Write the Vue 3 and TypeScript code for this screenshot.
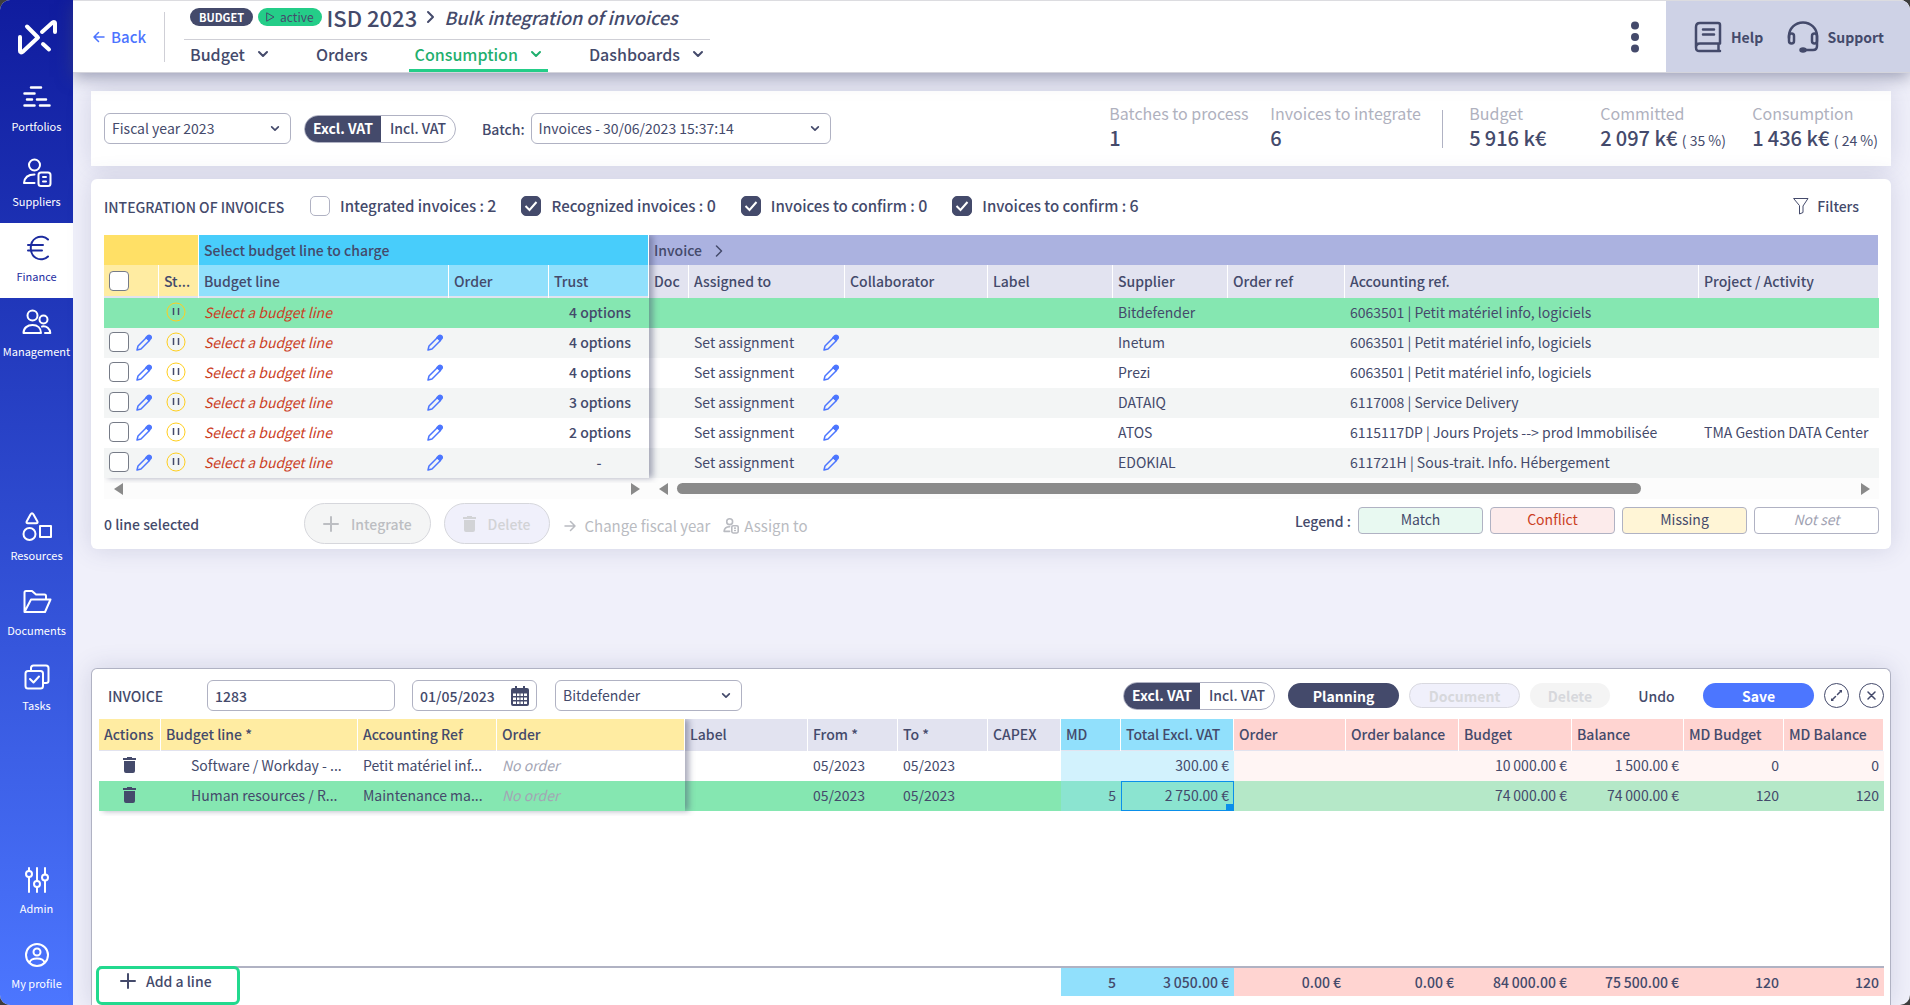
<script setup lang="ts">
import { ref } from 'vue'

interface NavItem {
  label: string
  icon: string
  active?: boolean
}

const navGroups: NavItem[][] = [
  [
    {
      label: 'Portfolios',
      icon: '<path d="M9 4.500h10M2.500 10.500h10M5 16.500h5M15 16.500h9M2.500 22.500h10M18 22.500h9.500" stroke-width="2.500"/>',
    },
    {
      label: 'Suppliers',
      icon: '<circle cx="12.500" cy="7" r="5.500"/><path d="M12.500 16.500c-6 0-10 3-10.500 8.500h10.500"/><rect x="16.500" y="14.500" width="12" height="13.500" rx="2.500"/><path d="M21 19h3M21 23.500h3"/>',
    },
    {
      label: 'Finance',
      active: true,
      icon: '<path d="M26 6.500c-3-3-8-3.800-12-1.500-7 4-7 16 0 20 4 2.300 9 1.500 12-1.500M6 12h15M6 17.500h14"/>',
    },
    {
      label: 'Management',
      icon: '<circle cx="10.500" cy="7.500" r="5"/><circle cx="21.500" cy="11.500" r="4"/><path d="M1.500 25c0-5 4-8 9-8s8.500 3 8.500 8zM20 18.500c4.500-.8 8 2 8.300 6.500H23"/>',
    },
  ],
  [
    {
      label: 'Resources',
      icon: '<path d="M8.500 2.500q1.500-2.300 3 0l3.800 6.800q1 2-1.200 2H6q-2.200 0-1.200-2z"/><circle cx="7.500" cy="22" r="6"/><path d="M18 14h11v11H18z"/>',
    },
    {
      label: 'Documents',
      icon: '<path d="M2.500 25V5.500q0-1.500 1.500-1.500h6l4 3.500h8.500q1.500 0 1.500 1.500v3M2.500 25h20.500l5.500-12.500H9z"/>',
    },
    {
      label: 'Tasks',
      icon: '<rect x="3.500" y="9" width="17.500" height="17.500" rx="2.500"/><path d="M9 8.500V6q0-2.500 2.500-2.500H24q2.500 0 2.500 2.500v13q0 2-2.500 2h-2M8 17l3.500 3.500 5.500-6"/>',
    },
  ],
  [
    {
      label: 'Admin',
      icon: '<path d="M7 3v2.500M7 12v15M15 3v12.500M15 22.500V27M23 3v6.500M23 16v11"/><circle cx="7" cy="9" r="3"/><circle cx="15" cy="19" r="3"/><circle cx="23" cy="12.500" r="3"/>',
    },
    {
      label: 'My profile',
      icon: '<circle cx="15" cy="15" r="11"/><circle cx="15" cy="12" r="3.500"/><path d="M7.500 22.500c1-3.500 4-4 7.500-4s6.500.5 7.500 4"/>',
    },
  ],
]

const tabs = [
  { label: 'Budget', menu: true, active: false },
  { label: 'Orders', menu: false, active: false },
  { label: 'Consumption', menu: true, active: true },
  { label: 'Dashboards', menu: true, active: false },
]

const filters = ref([
  { id: 'f-integrated', label: 'Integrated invoices :', count: 2, on: false },
  { id: 'f-recognized', label: 'Recognized invoices :', count: 0, on: true },
  { id: 'f-confirm', label: 'Invoices to confirm :', count: 0, on: true },
  { id: 'f-pending', label: 'Invoices to confirm :', count: 6, on: true },
])

const invoices = [
  { trust: '4 options', supplier: 'Bitdefender', ref: '6063501 | Petit matériel info, logiciels', project: '', selected: true },
  { trust: '4 options', supplier: 'Inetum', ref: '6063501 | Petit matériel info, logiciels', project: '', selected: false },
  { trust: '4 options', supplier: 'Prezi', ref: '6063501 | Petit matériel info, logiciels', project: '', selected: false },
  { trust: '3 options', supplier: 'DATAIQ', ref: '6117008 | Service Delivery', project: '', selected: false },
  { trust: '2 options', supplier: 'ATOS', ref: '6115117DP | Jours Projets --> prod Immobilisée', project: 'TMA Gestion DATA Center', selected: false },
  { trust: '-', supplier: 'EDOKIAL', ref: '611721H | Sous-trait. Info. Hébergement', project: '', selected: false },
]

const legend = [
  { label: 'Match', kind: 'match' },
  { label: 'Conflict', kind: 'conflict' },
  { label: 'Missing', kind: 'missing' },
  { label: 'Not set', kind: 'unset' },
]

const lineHeads = [
  { label: 'Label', kind: 'plain' },
  { label: 'From *', kind: 'plain' },
  { label: 'To *', kind: 'plain' },
  { label: 'CAPEX', kind: 'plain' },
  { label: 'MD', kind: 'blue' },
  { label: 'Total Excl. VAT', kind: 'blue' },
  { label: 'Order', kind: 'red' },
  { label: 'Order balance', kind: 'red' },
  { label: 'Budget', kind: 'red' },
  { label: 'Balance', kind: 'red' },
  { label: 'MD Budget', kind: 'red' },
  { label: 'MD Balance', kind: 'red' },
]

const lines = [
  {
    budget: 'Software / Workday - ...',
    account: 'Petit matériel inf...',
    selected: false,
    cells: ['', '05/2023', '05/2023', '', '', '300.00 €', '', '', '10\u2009000.00 €', '1\u2009500.00 €', '0', '0'],
  },
  {
    budget: 'Human resources / R...',
    account: 'Maintenance ma...',
    selected: true,
    cells: ['', '05/2023', '05/2023', '', '5', '2\u2009750.00 €', '', '', '74\u2009000.00 €', '74\u2009000.00 €', '120', '120'],
  },
]

const totals = ['', '', '', '', '5', '3\u2009050.00 €', '0.00 €', '0.00 €', '84\u2009000.00 €', '75\u2009500.00 €', '120', '120']

const invoiceNumber = ref('1283')
const invoiceDate = ref('01/05/2023')
</script>

<template>
  <div class="app">
    <nav class="sidebar" aria-label="Main">
      <ul class="nav-group">
        <li class="logo">
          <svg width="42" height="36" viewBox="0 0 42 36" fill="none" stroke="#fff" stroke-width="4" stroke-linecap="round" stroke-linejoin="round">
            <path d="M4 18v14q0 2.500 3 .5L22 18.500 11 7.500M26 13L36 4q3-2 3 .5V13M27 25l6 5.500" />
          </svg>
        </li>
        <li v-for="item in navGroups[0]" :key="item.label">
          <a href="#" class="nav-item" :class="{ active: item.active }">
            <svg width="30" height="30" viewBox="0 0 30 30" v-html="item.icon" />
            <span>{{ item.label }}</span>
          </a>
        </li>
      </ul>
      <ul v-for="(group, g) in navGroups.slice(1)" :key="g" class="nav-group">
        <li v-for="item in group" :key="item.label">
          <a href="#" class="nav-item">
            <svg width="30" height="30" viewBox="0 0 30 30" v-html="item.icon" />
            <span>{{ item.label }}</span>
          </a>
        </li>
      </ul>
    </nav>

    <div class="page">
      <header class="topbar">
        <a href="#" class="back">
          <svg width="12" height="12" viewBox="0 0 12 12" class="stroke mid"><path d="M11 6H1M5.500 1.500L1 6l4.500 4.500" /></svg>
          Back
        </a>
        <div class="heading">
          <div class="title-row">
            <span class="badge dark">BUDGET</span>
            <span class="badge green">
              <svg width="9" height="10" viewBox="0 0 9 10" class="stroke"><path d="M1 1l7 4-7 4z" /></svg>
              active
            </span>
            <h1>ISD 2023</h1>
            <svg class="stroke crumb" width="9" height="14" viewBox="0 0 9 14"><path d="M2 2l5 5-5 5" /></svg>
            <span class="subtitle">Bulk integration of invoices</span>
          </div>
          <div class="tabs">
            <a v-for="tab in tabs" :key="tab.label" href="#" class="tab" :class="{ active: tab.active }">
              {{ tab.label }}
              <svg v-if="tab.menu" class="stroke chev" width="12" height="8" viewBox="0 0 12 8"><path d="M2 2l4 4 4-4" /></svg>
            </a>
          </div>
        </div>
        <button class="dots" aria-label="More actions">
          <svg width="8" height="32" viewBox="0 0 8 32" fill="currentColor"><circle cx="4" cy="4.500" r="4" /><circle cx="4" cy="16" r="4" /><circle cx="4" cy="27.500" r="4" /></svg>
        </button>
        <div class="assist">
          <a href="#">
            <svg width="28" height="32" viewBox="0 0 28 32" class="stroke heavy"><path d="M26 22.500V4q0-2-2-2H6Q2 2 2 6v20M26 22.500H6q-4 0-4 4T6 30h20M24.500 22.500V30" /><path d="M9 8.500h11M9 13.500h11" /></svg>
            Help
          </a>
          <a href="#">
            <svg width="32" height="32" viewBox="0 0 32 32" class="stroke heavy"><path d="M2 17v-2a14 13.500 0 0 1 28 0v10q0 4-4 4h-9" /><rect x="2" y="12.500" width="5" height="10" rx="2.500" /><rect x="25" y="12.500" width="5" height="10" rx="2.500" /><ellipse cx="16" cy="29" rx="2.500" ry="1.500" fill="currentColor" /></svg>
            Support
          </a>
        </div>
      </header>

      <main class="content">
        <section class="card toolbar">
          <div class="select fiscal">
            <select aria-label="Fiscal year"><option>Fiscal year 2023</option></select>
            <svg class="stroke chev" width="10" height="7" viewBox="0 0 12 8"><path d="M2 2l4 4 4-4" /></svg>
          </div>
          <div class="toggle">
            <button class="on">Excl. VAT</button><button>Incl. VAT</button>
          </div>
          <label for="batch" class="batch-label">Batch:</label>
          <div class="select batch">
            <select id="batch"><option>Invoices - 30/06/2023 15:37:14</option></select>
            <svg class="stroke chev" width="10" height="7" viewBox="0 0 12 8"><path d="M2 2l4 4 4-4" /></svg>
          </div>
          <dl class="stats">
            <div class="w-batches"><dt>Batches to process</dt><dd>1</dd></div>
            <div class="w-invoices"><dt>Invoices to integrate</dt><dd>6</dd></div>
            <div class="w-budget"><dt>Budget</dt><dd>5&#8201;916 k€</dd></div>
            <div class="w-committed"><dt>Committed</dt><dd>2&#8201;097 k€ <small>( 35 %)</small></dd></div>
            <div><dt>Consumption</dt><dd>1&#8201;436 k€ <small>( 24 %)</small></dd></div>
          </dl>
        </section>

        <section class="card integration">
          <div class="filter-row">
            <h2>INTEGRATION OF INVOICES</h2>
            <label v-for="f in filters" :key="f.id" class="filter" :for="f.id">
              <input :id="f.id" v-model="f.on" type="checkbox" />
              <span>{{ f.label }} <b>{{ f.count }}</b></span>
            </label>
            <button class="filters-btn">
              <svg width="16" height="18" viewBox="0 0 16 18" class="stroke thin"><path d="M1 1.500h14l-5 7.500v6.500L6.500 17V9z" /></svg>
              Filters
            </button>
          </div>

          <div class="grid-area">
            <div class="pane frozen">
              <table>
                <colgroup><col class="c55" /><col class="c40" /><col class="c250" /><col class="c100" /><col class="c100" /></colgroup>
                <thead>
                  <tr class="group-row">
                    <th colspan="2" class="yellow-strong"></th>
                    <th colspan="3" class="blue-strong">Select budget line to charge</th>
                  </tr>
                  <tr>
                    <th class="yellow"><input type="checkbox" class="box" aria-label="Select all" /></th>
                    <th class="yellow">St...</th>
                    <th class="blue">Budget line</th>
                    <th class="blue">Order</th>
                    <th class="blue">Trust</th>
                  </tr>
                </thead>
                <tbody>
                  <tr v-for="row in invoices" :key="row.supplier" :class="{ selected: row.selected }">
                    <td>
                      <div v-if="!row.selected" class="picker">
                        <input type="checkbox" class="box" :aria-label="'Select ' + row.supplier" />
                        <svg class="pencil" width="16" height="17" viewBox="0 0 16 17"><path d="M2 12l8.500-8.500 3 3L5 15l-4 1z" /><path class="cap" d="M10 3.500l2-2q1.200-.8 2.500.4t.5 2.600l-2 2z" /></svg>
                      </div>
                    </td>
                    <td class="status">
                      <svg class="pause" width="20" height="20" viewBox="0 0 20 20"><circle cx="10" cy="10" r="9" /><path d="M7.500 6v7M12.500 6v7" /></svg>
                    </td>
                    <td>
                      <div class="editable">
                        <em class="missing-line">Select a budget line</em>
                        <svg v-if="!row.selected" class="pencil" width="16" height="17" viewBox="0 0 16 17"><path d="M2 12l8.500-8.500 3 3L5 15l-4 1z" /><path class="cap" d="M10 3.500l2-2q1.200-.8 2.500.4t.5 2.600l-2 2z" /></svg>
                      </div>
                    </td>
                    <td></td>
                    <td class="trust" :class="{ center: row.trust === '-' }">{{ row.trust }}</td>
                  </tr>
                </tbody>
              </table>
            </div>
            <div class="pane">
              <table>
                <colgroup>
                  <col class="c40" /><col class="c156" /><col class="c143" /><col class="c125" /><col class="c115" /><col class="c117" /><col class="c354" /><col />
                </colgroup>
                <thead>
                  <tr class="group-row">
                    <th colspan="8" class="violet">
                      Invoice
                      <svg class="stroke mid" width="8" height="12" viewBox="0 0 8 12"><path d="M1.500 1L6.500 6l-5 5" /></svg>
                    </th>
                  </tr>
                  <tr>
                    <th v-for="h in ['Doc', 'Assigned to', 'Collaborator', 'Label', 'Supplier', 'Order ref', 'Accounting ref.', 'Project / Activity']" :key="h" class="plain">{{ h }}</th>
                  </tr>
                </thead>
                <tbody>
                  <tr v-for="row in invoices" :key="row.supplier" :class="{ selected: row.selected }">
                    <td></td>
                    <td>
                      <div v-if="!row.selected" class="editable">
                        Set assignment
                        <svg class="pencil" width="16" height="17" viewBox="0 0 16 17"><path d="M2 12l8.500-8.500 3 3L5 15l-4 1z" /><path class="cap" d="M10 3.500l2-2q1.200-.8 2.500.4t.5 2.600l-2 2z" /></svg>
                      </div>
                    </td>
                    <td></td>
                    <td></td>
                    <td>{{ row.supplier }}</td>
                    <td></td>
                    <td>{{ row.ref }}</td>
                    <td>{{ row.project }}</td>
                  </tr>
                </tbody>
              </table>
            </div>
          </div>

          <div class="scrollbars">
            <div class="scroll left"><i class="arrow prev" /><i class="arrow next" /></div>
            <div class="scroll"><i class="arrow prev" /><div class="track"><div class="thumb" /></div><i class="arrow next" /></div>
          </div>

          <div class="actions">
            <strong class="count">0 line selected</strong>
            <button class="pill big" disabled>
              <svg width="16" height="16" viewBox="0 0 16 16" class="stroke"><path d="M8 1v14M1 8h14" /></svg>
              Integrate
            </button>
            <button class="pill big lilac" disabled>
              <svg width="13" height="16" viewBox="0 0 13 16" fill="currentColor"><path d="M0 1h4V0h5v1h4v2H0zM1 4h11v10q0 2-2 2H3q-2 0-2-2z" /></svg>
              Delete
            </button>
            <button class="flat" disabled>
              <svg width="12" height="12" viewBox="0 0 12 12" class="stroke mid"><path d="M1 6h10M6.500 1.500L11 6l-4.500 4.500" /></svg>
              Change fiscal year
            </button>
            <button class="flat assign" disabled>
              <svg width="16" height="16" viewBox="0 0 30 30" class="stroke heavy"><circle cx="12.500" cy="7" r="5.500" /><path d="M12.500 16.500c-6 0-10 3-10.500 8.500h10.500" /><rect x="16.500" y="14.500" width="12" height="13.500" rx="2.500" /><path d="M22 19h1M22 23.500h1" /></svg>
              Assign to
            </button>
            <div class="legend">
              <strong>Legend :</strong>
              <span v-for="l in legend" :key="l.kind" class="chip" :class="l.kind">{{ l.label }}</span>
            </div>
          </div>
        </section>

        <section class="card invoice">
          <div class="invoice-bar">
            <h2>INVOICE</h2>
            <input v-model="invoiceNumber" class="field number" aria-label="Invoice number" />
            <div class="field date">
              <input v-model="invoiceDate" aria-label="Invoice date" />
              <svg width="18" height="20" viewBox="0 0 18 20"><path d="M2 2h14q2 0 2 2v14q0 2-2 2H2q-2 0-2-2V4q0-2 2-2zM4 0h2v3H4zM12 0h2v3h-2z" fill="currentColor" /><path d="M2 7.500h3v2.500H2zM6 7.500h2.500v2.500H6zM9.500 7.500H12v2.500H9.500zM13 7.500h3v2.500h-3zM2 11.500h3V14H2zM6 11.500h2.500V14H6zM9.500 11.500H12V14H9.500zM13 11.500h3V14h-3zM2 15.500h3V18H2zM6 15.500h2.500V18H6zM9.500 15.500H12V18H9.500zM13 15.500h3V18h-3z" fill="#fff" /></svg>
            </div>
            <div class="select fiscal">
              <select aria-label="Supplier"><option>Bitdefender</option></select>
              <svg class="stroke chev" width="10" height="7" viewBox="0 0 12 8"><path d="M2 2l4 4 4-4" /></svg>
            </div>
            <div class="invoice-actions">
              <div class="toggle">
                <button class="on">Excl. VAT</button><button>Incl. VAT</button>
              </div>
              <button class="pill planning">Planning</button>
              <button class="pill lilac" disabled>Document</button>
              <button class="pill ghost" disabled>Delete</button>
              <button class="undo">Undo</button>
              <button class="pill save">Save</button>
              <button class="round" aria-label="Expand">
                <svg width="13" height="13" viewBox="0 0 13 13" class="stroke mid"><path d="M2 11l3.500-3.500M7.500 5.500L11 2" /><path d="M9 1h3v3zM1 9v3h3z" fill="currentColor" stroke="none" /></svg>
              </button>
              <button class="round" aria-label="Close">
                <svg width="9" height="9" viewBox="0 0 9 9" class="stroke mid"><path d="M1 1l7 7M8 1L1 8" /></svg>
              </button>
            </div>
          </div>

          <div class="grid-area">
            <div class="pane frozen lines-left">
              <table>
                <colgroup><col class="c62" /><col class="c197" /><col class="c139" /><col /></colgroup>
                <thead>
                  <tr><th v-for="h in ['Actions', 'Budget line *', 'Accounting Ref', 'Order']" :key="h" class="yellow">{{ h }}</th></tr>
                </thead>
                <tbody>
                  <tr v-for="line in lines" :key="line.budget" :class="{ selected: line.selected }">
                    <td>
                      <button class="trash" aria-label="Delete line">
                        <svg width="13" height="16" viewBox="0 0 13 16" fill="currentColor"><path d="M0 1h4V0h5v1h4v2H0zM1 4h11v10q0 2-2 2H3q-2 0-2-2z" /></svg>
                      </button>
                    </td>
                    <td class="indent">{{ line.budget }}</td>
                    <td>{{ line.account }}</td>
                    <td><em class="muted">No order</em></td>
                  </tr>
                </tbody>
              </table>
            </div>
            <div class="pane">
              <table class="lines">
                <colgroup>
                  <col class="c123" /><col class="c90" /><col class="c90" /><col class="c73" /><col class="c60" /><col class="c113" /><col class="c112" /><col class="c113" /><col class="c113" /><col class="c112" /><col class="c100" /><col />
                </colgroup>
                <thead>
                  <tr><th v-for="(h, i) in lineHeads" :key="i" :class="h.kind">{{ h.label }}</th></tr>
                </thead>
                <tbody>
                  <tr v-for="line in lines" :key="line.budget" :class="{ selected: line.selected }">
                    <td v-for="(cell, i) in line.cells" :key="i" :class="[lineHeads[i].kind, { focus: line.selected && i === 5 }]">{{ cell }}</td>
                  </tr>
                </tbody>
              </table>
            </div>
          </div>

          <div class="totals">
            <div class="add"><button class="add-line">
              <svg width="16" height="16" viewBox="0 0 16 16" class="stroke"><path d="M8 1v14M1 8h14" /></svg>
              Add a line
            </button></div>
            <div class="pane">
              <table class="lines">
                <colgroup>
                  <col class="c123" /><col class="c90" /><col class="c90" /><col class="c73" /><col class="c60" /><col class="c113" /><col class="c112" /><col class="c113" /><col class="c113" /><col class="c112" /><col class="c100" /><col />
                </colgroup>
                <tbody>
                  <tr><td v-for="(cell, i) in totals" :key="i" :class="lineHeads[i].kind">{{ cell }}</td></tr>
                </tbody>
              </table>
            </div>
          </div>
        </section>
      </main>
    </div>
  </div>
</template>

<style>
body {
  background: #3d3d3d;
}
</style>

<style scoped>
* {
  box-sizing: border-box;
}
.app {
  --ink: #444a6b;
  --line: #b0b2c3;
  display: flex;
  min-height: 100vh;
  border-radius: 10px;
  overflow: hidden;
  background: #f0f0fa;
  color: var(--ink);
  font: 14px/20px 'Noto Sans CJK SC', 'Noto Sans', sans-serif;
}
h1, h2, ul, dl, dd {
  margin: 0;
  padding: 0;
}
a {
  color: inherit;
  text-decoration: none;
}
button, input, select {
  font: inherit;
  color: inherit;
  margin: 0;
}
button {
  border: 0;
  padding: 0;
  background: none;
  font-weight: 500;
}
svg {
  flex: none;
}
.stroke {
  fill: none;
  stroke: currentColor;
  stroke-width: 2;
  stroke-linecap: round;
  stroke-linejoin: round;
}
.stroke.thin {
  stroke-width: 1;
}
.stroke.mid {
  stroke-width: 1.5;
}
.stroke.heavy {
  stroke-width: 3;
}

/* Sidebar */
.sidebar {
  flex: none;
  width: 73px;
  display: flex;
  flex-direction: column;
  justify-content: space-between;
  background: linear-gradient(#101c9e 0%, #1f35b8 28%, #4c76ff 100%);
  color: #fff;
}
.nav-group {
  list-style: none;
}
.logo {
  height: 73px;
  display: flex;
  align-items: center;
  justify-content: center;
}
.nav-item {
  height: 75px;
  padding-bottom: 4px;
  display: flex;
  flex-direction: column;
  align-items: center;
  justify-content: center;
  gap: 5px;
  font-size: 11px;
  line-height: 16px;
}
.nav-item svg {
  fill: none;
  stroke: currentColor;
  stroke-width: 2;
  stroke-linecap: round;
  stroke-linejoin: round;
}
.nav-item.active {
  background: #fff;
  color: #1c2b9f;
}

/* Top bar */
.page {
  flex: 1;
  min-width: 0;
  display: flex;
  flex-direction: column;
}
.topbar {
  position: relative;
  z-index: 1;
  height: 73px;
  display: flex;
  align-items: center;
  background: #fff;
  border-top: 1px solid #dcdce0;
  border-bottom: 1px solid #d4d4dc;
  box-shadow: 0 4px 16px rgba(68, 74, 109, 0.5);
}
.back {
  width: 92px;
  height: 50px;
  padding-left: 20px;
  display: flex;
  align-items: center;
  gap: 6px;
  border-right: 1px solid #cfcfd6;
  color: #4c74ff;
  font-size: 15px;
  font-weight: 500;
}
.heading {
  margin-left: 19px;
  align-self: stretch;
  display: flex;
  flex-direction: column;
}
.title-row {
  height: 39px;
  padding: 0 27px 6px 6px;
  display: flex;
  align-items: center;
  border-bottom: 1px solid #cfcfd6;
}
.badge {
  height: 18px;
  padding: 0 9px;
  display: flex;
  align-items: center;
  gap: 5px;
  border-radius: 9px;
  font-size: 12px;
  line-height: 18px;
}
.badge.dark {
  background: var(--ink);
  color: #fff;
  font-size: 11px;
  font-weight: 700;
}
.badge.green {
  margin-left: 5px;
  padding: 0 8px;
  background: #24cd88;
}
.badge.green .stroke {
  stroke-width: 1;
}
h1 {
  margin-left: 5px;
  font-size: 22px;
  line-height: 32px;
  font-weight: 500;
}
.crumb {
  margin: 0 9px;
}
.subtitle {
  font-size: 18px;
  font-weight: 500;
  font-style: italic;
}
.tabs {
  flex: 1;
  display: flex;
  gap: 35px;
}
.tab {
  padding: 0 6px 5px;
  display: flex;
  align-items: center;
  gap: 12px;
  font-size: 16px;
  font-weight: 500;
}
.tab.active {
  padding-bottom: 2px;
  border-bottom: 3px solid #24cd88;
  color: #1faf6e;
}
.dots {
  margin-left: auto;
  margin-right: 27px;
  height: 32px;
}
.assist {
  align-self: stretch;
  width: 244px;
  padding: 0 26px 0 28px;
  display: flex;
  align-items: center;
  justify-content: space-between;
  background: #ced2e6;
  font-weight: 700;
}
.assist a {
  display: flex;
  align-items: center;
  gap: 9px;
}
.assist .heavy {
  stroke-width: 2.5;
}

/* Shared controls */
.content {
  flex: 1;
  padding: 18px 19px 0 18px;
  display: flex;
  flex-direction: column;
}
.card {
  background: #fff;
  box-shadow: 0 0 24px rgba(68, 74, 130, 0.18);
}
.select {
  position: relative;
}
.select.fiscal {
  width: 187px;
}
.select.batch {
  width: 300px;
}
.select select {
  appearance: none;
  display: block;
  width: 100%;
  height: 31px;
  padding: 0 30px 2px 7px;
  border: 1px solid var(--line);
  border-radius: 6px;
  background: #fff;
}
.select .chev {
  position: absolute;
  right: 11px;
  top: 12px;
  pointer-events: none;
}
.toggle {
  display: flex;
  height: 28px;
  border: 1px solid var(--line);
  border-radius: 14px;
  overflow: hidden;
}
.toggle button {
  width: 74px;
  padding: 0 0 1px;
}
.toggle .on {
  width: 76px;
  background: var(--ink);
  color: #fff;
  font-weight: 700;
}
.pill {
  width: 111px;
  height: 25px;
  border-radius: 13px;
  font-weight: 700;
}
.pill:disabled {
  color: #d7d8dc;
}
.pill.planning {
  background: var(--ink);
  color: #fff;
}
.pill.lilac {
  background: #f0f0fb;
  border: 1px solid #d9d9e0;
}
.pill.ghost {
  width: 80px;
  background: #f4f4f4;
}
.pill.save {
  background: #4c76ff;
  color: #fff;
}
.pill.big {
  width: auto;
  height: 41px;
  padding: 0 18px;
  display: flex;
  align-items: center;
  gap: 12px;
  border: 1px solid #d6d7dc;
  border-radius: 21px;
  background: #f4f5f5;
  color: #bcbec2;
  font-weight: 500;
}
.pill.big.lilac {
  background: #f0f0fb;
  color: #d2d3d6;
}

/* Toolbar card */
.toolbar {
  height: 75px;
  padding: 0 13px;
  display: flex;
  align-items: center;
}
.toolbar .toggle {
  margin-left: 13px;
}
.batch-label {
  margin: 0 6px 0 26px;
  font-weight: 500;
}
.stats {
  margin-left: auto;
  padding-bottom: 2px;
  display: flex;
}
.stats dt {
  font-size: 16px;
  line-height: 22px;
  color: #afb1be;
}
.stats dd {
  font-size: 20px;
  line-height: 28px;
  font-weight: 500;
}
.stats small {
  font-size: 14px;
  font-weight: 400;
}
.w-batches {
  width: 161px;
}
.w-invoices {
  position: relative;
  width: 173px;
}
.w-invoices::after {
  content: '';
  position: absolute;
  right: 0;
  top: 8px;
  height: 38px;
  border-right: 1px solid var(--line);
}
.w-budget {
  width: 157px;
  padding-left: 26px;
}
.w-committed {
  width: 152px;
}

/* Integration card */
.integration {
  margin-top: 13px;
  padding: 0 12px 0 13px;
  border-radius: 6px;
}
.filter-row {
  height: 56px;
  display: flex;
  align-items: center;
}
h2 {
  width: 206px;
  font-size: 14px;
  font-weight: 500;
  white-space: nowrap;
}
.filter {
  margin: 0 25px 3px 0;
  display: flex;
  align-items: center;
  gap: 10px;
  font-size: 15px;
  font-weight: 500;
}
.filter b {
  font-size: 16px;
  font-weight: 500;
}
.filter input, .box {
  appearance: none;
  flex: none;
  width: 20px;
  height: 20px;
  border: 1px solid var(--line);
  border-radius: 5px;
  background: #fff;
}
.filter input:checked {
  border-color: var(--ink);
  background: var(--ink) url("data:image/svg+xml,%3Csvg xmlns='http://www.w3.org/2000/svg' viewBox='0 0 18 18'%3E%3Cpath d='M3.500 9l4 4 7-8' fill='none' stroke='%23fff' stroke-width='2'/%3E%3C/svg%3E");
}
.box {
  display: block;
  border: 1px solid #767b87;
  border-radius: 4px;
}
.filters-btn {
  margin-left: auto;
  padding: 0 20px 2px 0;
  display: flex;
  align-items: center;
  gap: 8px;
}

/* Data grids */
.grid-area {
  display: flex;
}
.pane {
  flex: 1;
  min-width: 0;
  overflow: hidden;
}
.pane.frozen {
  position: relative;
  z-index: 1;
  flex: none;
  width: 545px;
  overflow: visible;
  box-shadow: 4px 0 6px rgba(68, 74, 109, 0.45);
  clip-path: inset(0 -14px -5px 0);
}
.pane.lines-left {
  width: 586px;
}
table {
  width: 100%;
  table-layout: fixed;
  border-collapse: separate;
  border-spacing: 0;
}
th, td {
  height: 30px;
  padding: 0 5px 2px;
  text-align: left;
  white-space: nowrap;
  overflow: hidden;
}
th {
  height: 33px;
  border-right: 1px solid #fff;
  font-weight: 500;
  background-clip: padding-box;
  box-shadow: inset 0 -2px #e2e3ef;
}
.group-row th {
  height: 30px;
  padding-bottom: 0;
  box-shadow: none;
}
.c40 { width: 40px; }
.c55 { width: 55px; }
.c60 { width: 60px; }
.c62 { width: 62px; }
.c73 { width: 73px; }
.c90 { width: 90px; }
.c100 { width: 100px; }
.c112 { width: 112px; }
.c113 { width: 113px; }
.c115 { width: 115px; }
.c117 { width: 117px; }
.c123 { width: 123px; }
.c125 { width: 125px; }
.c139 { width: 139px; }
.c143 { width: 143px; }
.c156 { width: 156px; }
.c197 { width: 197px; }
.c250 { width: 250px; }
.c354 { width: 354px; }
.yellow-strong { background-color: #ffe066; }
.yellow { background-color: #ffeca2; }
.blue-strong { background-color: #48cdfb; }
.violet { background-color: #abb2e0; }
th.blue { background-color: #91e0fc; }
th.plain { background-color: #e2e3f0; }
th.red { background-color: #ffd4d1; }
.violet svg {
  margin-left: 10px;
  vertical-align: -1px;
}
.integration tbody tr {
  background: #fff;
}
.integration tbody tr:nth-child(even) {
  background: #f3f5f5;
}
tbody tr.selected,
.integration tbody tr.selected {
  background: #85e7b1;
}
.picker {
  display: flex;
  align-items: center;
  gap: 7px;
}
.editable {
  padding-right: 1px;
  display: flex;
  align-items: center;
  justify-content: space-between;
}
.pencil {
  fill: none;
  stroke: #4c76ff;
  stroke-width: 1.5;
  stroke-linejoin: round;
}
.pencil .cap {
  fill: #4c76ff;
}
.status {
  padding-left: 7px;
}
.pause {
  display: block;
  fill: none;
  stroke: #ffcf1f;
}
.pause path {
  stroke: var(--ink);
  stroke-width: 1.5;
}
.missing-line {
  color: #cb401f;
}
.trust {
  padding-right: 18px;
  text-align: right;
  font-weight: 500;
}
.trust.center {
  padding-left: 18px;
  text-align: center;
}

/* Scroll strips */
.scrollbars {
  height: 21px;
  display: flex;
  background: #fcfcfc;
}
.scroll {
  flex: 1;
  padding: 0 9px 0 10px;
  display: flex;
  align-items: center;
  justify-content: space-between;
}
.scroll.left {
  flex: none;
  width: 545px;
}
.arrow {
  border: 6px solid transparent;
}
.arrow.prev {
  border-left: 0;
  border-right: 9px solid #8a8a8a;
}
.arrow.next {
  border-right: 0;
  border-left: 9px solid #8a8a8a;
}
.track {
  flex: 1;
  margin: 0 9px;
}
.thumb {
  width: 82%;
  height: 11px;
  border-radius: 6px;
  background: #8a8a8a;
}

/* Actions under the grid */
.actions {
  height: 50px;
  padding-bottom: 1px;
  display: flex;
  align-items: center;
}
strong {
  font-weight: 500;
}
.count {
  width: 200px;
}
.pill.big + .pill.big {
  margin-left: 13px;
}
.flat {
  margin-left: 14px;
  padding-top: 4px;
  display: flex;
  align-items: center;
  gap: 9px;
  color: #b9bbc1;
  font-size: 15px;
  font-weight: 400;
}
.flat.assign {
  margin-left: 13px;
  gap: 5px;
}
.legend {
  margin-left: auto;
  padding-bottom: 6px;
  display: flex;
  align-items: center;
  gap: 7px;
}
.chip {
  width: 125px;
  height: 27px;
  border: 1px solid var(--line);
  border-radius: 4px;
  text-align: center;
  line-height: 23px;
}
.chip.match { background: #e8f9f1; }
.chip.conflict { background: #fcebeb; color: #cb401f; }
.chip.missing { background: #fff5d6; }
.chip.unset { color: #9fa2b2; font-style: italic; }

/* Invoice panel */
.invoice {
  margin-top: auto;
  height: 337px;
  padding: 0 6px 0 7px;
  display: flex;
  flex-direction: column;
  border: 1px solid var(--line);
  border-bottom: 0;
  border-radius: 6px 6px 0 0;
}
.invoice-bar {
  height: 50px;
  padding: 3px 0 0 9px;
  display: flex;
  align-items: center;
}
.invoice-bar h2 {
  width: 99px;
}
.field {
  height: 31px;
  padding: 0 7px;
  border: 1px solid var(--line);
  border-radius: 6px;
  background: #fff;
  font-weight: 500;
}
.field.number {
  width: 188px;
}
.field.date {
  width: 125px;
  margin: 0 18px 0 17px;
  display: flex;
  align-items: center;
  justify-content: space-between;
}
.date input {
  width: 84px;
  padding: 0;
  border: 0;
  outline: 0;
  background: none;
}
.invoice-actions {
  margin-left: auto;
  display: flex;
  align-items: center;
  gap: 10px;
}
.invoice-actions .toggle {
  margin-right: 3px;
}
.undo {
  width: 73px;
}
.round {
  width: 25px;
  height: 25px;
  display: flex;
  align-items: center;
  justify-content: center;
  border: 1px solid var(--ink);
  border-radius: 50%;
}
.invoice th {
  height: 32px;
  box-shadow: inset 0 -1px #e2e3ef;
}
.indent {
  padding-left: 30px;
}
.muted {
  color: #a3a5b4;
}
.trash {
  display: block;
  margin-left: 19px;
  height: 16px;
}
.trash svg {
  display: block;
}
.lines td:nth-child(n + 5) {
  text-align: right;
}
tbody .blue { background: #d2f2fd; }
tbody .red { background: #fff5f4; }
.selected .blue { background: #8be4d0; }
.selected .red { background: #b5e8c8; }
.focus {
  position: relative;
  box-shadow: inset 0 0 0 1px #0a8fea;
}
.focus::after {
  content: '';
  position: absolute;
  right: 0;
  bottom: 0;
  width: 8px;
  height: 7px;
  background: #0a8fea;
}
.totals {
  margin-top: auto;
  height: 39px;
  display: flex;
  border-top: 2px solid var(--line);
}
.totals td {
  height: 28px;
  padding-bottom: 0;
  font-weight: 500;
}
.totals .blue { background: #91e0fc; }
.totals .red { background: #ffd4d1; }
.add {
  width: 586px;
}
.add-line {
  position: relative;
  left: -3px;
  top: -2px;
  width: 144px;
  height: 39px;
  padding: 0 0 9px 21px;
  display: flex;
  align-items: center;
  gap: 10px;
  border: 3px solid #22d98e;
  border-radius: 6px;
  background: #fff;
}
</style>
